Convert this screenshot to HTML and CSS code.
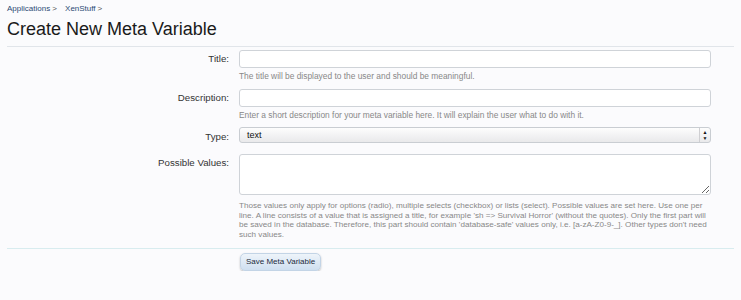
FILE: index.html
```html
<!DOCTYPE html>
<html lang="en">
<head>
    <meta charset="UTF-8">
    <title>Create New Meta Variable</title>
    <link rel="stylesheet" href="styles.css">
</head>
<body>
    <div class="crumbs">
        <a href="#">Applications</a><span class="arrow">&gt;</span>
        <a href="#">XenStuff</a><span class="arrow">&gt;</span>
    </div>
    <h1>Create New Meta Variable</h1>

    <form class="meta-form">
        <div class="row">
            <label class="label" for="title">Title:</label>
            <div class="field">
                <input class="text-input" id="title" type="text">
                <p class="hint">The title will be displayed to the user and should be meaningful.</p>
            </div>
        </div>
        <div class="row">
            <label class="label" for="desc">Description:</label>
            <div class="field">
                <input class="text-input" id="desc" type="text">
                <p class="hint">Enter a short description for your meta variable here. It will explain the user what to do with it.</p>
            </div>
        </div>
        <div class="row">
            <label class="label" for="type">Type:</label>
            <div class="field">
                <div class="select">
                    <span>text</span>
                    <span class="arrows">&#9650;<br>&#9660;</span>
                </div>
            </div>
        </div>
        <div class="row">
            <label class="label" for="values">Possible Values:</label>
            <div class="field">
                <textarea class="textarea" id="values"></textarea>
                <p class="hint long">Those values only apply for options (radio), multiple selects (checkbox) or lists (select). Possible values are set here. Use one per line. A line consists of a value that is assigned a title, for example 'sh =&gt; Survival Horror' (without the quotes). Only the first part will be saved in the database. Therefore, this part should contain 'database-safe' values only, i.e. [a-zA-Z0-9-_]. Other types don't need such values.</p>
            </div>
        </div>
        <div class="submit-row">
            <button type="button" class="button">Save Meta Variable</button>
        </div>
    </form>
</body>
</html>
```

FILE: styles.css
```css
body {
    margin: 0;
    background: #fbfbfd;
    font-family: 'Liberation Sans', Arial, sans-serif;
    color: #222;
}
.crumbs {
    padding: 3px 7px 0;
    font-size: 8px;
    line-height: 11px;
}
.crumbs a {
    color: #2b4a74;
    text-decoration: none;
}
.crumbs .arrow {
    color: #555;
    margin: 0 6px 0 2px;
}
h1 {
    margin: 2px 7px 0;
    padding-bottom: 4px;
    font-size: 18px;
    font-weight: normal;
    line-height: 26px;
    color: #1a1a1a;
    border-bottom: 1px solid #e1e5ea;
}
.meta-form {
    padding-top: 3px;
}
.row {
    display: grid;
    grid-template-columns: 229px 472px;
    column-gap: 10px;
    margin-bottom: 8px;
}
.label {
    text-align: right;
    font-size: 9.7px;
    line-height: 18px;
    color: #333;
}
.text-input {
    display: block;
    box-sizing: border-box;
    width: 100%;
    height: 18px;
    margin: 0;
    border: 1px solid #cfd3d8;
    border-radius: 3px;
    background: #fff;
}
.hint {
    margin: 3px 0 0;
    font-size: 8.4px;
    line-height: 10px;
    color: #888;
}
.select {
    box-sizing: border-box;
    display: flex;
    justify-content: space-between;
    align-items: center;
    height: 16px;
    margin-top: -1px;
    padding-left: 7px;
    border: 1px solid #c9cdd2;
    border-radius: 3px;
    background: linear-gradient(#fdfdfd, #e9e9eb);
    font-size: 9px;
    color: #111;
}
.select .arrows {
    width: 11px;
    height: 14px;
    border-left: 1px solid #cfcfd2;
    font-size: 5px;
    line-height: 6px;
    text-align: center;
    padding-top: 1px;
    box-sizing: border-box;
}
.textarea {
    display: block;
    box-sizing: border-box;
    width: 100%;
    height: 41px;
    margin: 0;
    border: 1px solid #cfd3d8;
    border-radius: 3px;
    background: #fff;
}
.hint.long {
    margin-top: 6px;
    font-size: 8.1px;
    line-height: 9.7px;
}
.submit-row {
    margin: 0 7px;
    padding: 4px 0 0 233px;
    border-top: 1px solid #d8ecef;
}
.button {
    display: block;
    height: 18px;
    padding: 0 5px;
    border: 1px solid #c3d4e6;
    border-radius: 5px;
    background: linear-gradient(#eef4fa, #cfdff0);
    box-shadow: 0 1px 2px rgba(0,0,0,0.25);
    font-family: 'Liberation Sans', Arial, sans-serif;
    font-size: 8px;
    color: #1c2a3b;
}
```
